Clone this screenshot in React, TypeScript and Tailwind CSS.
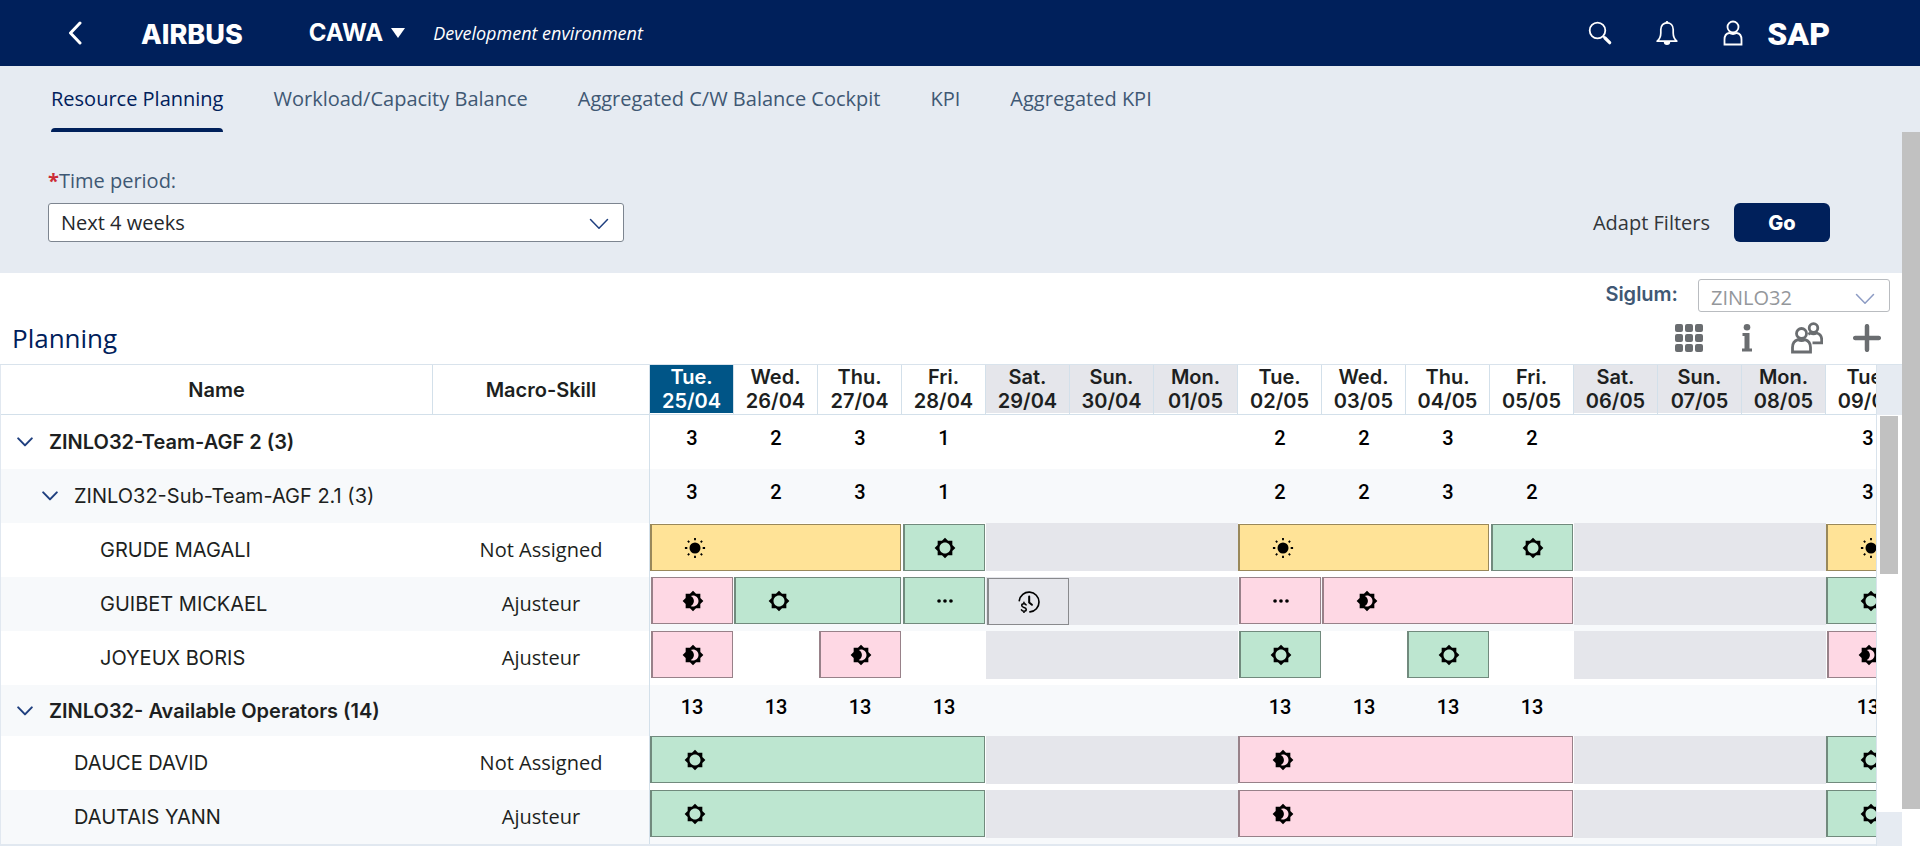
import { useState } from "react";
import type { ReactNode } from "react";

type Kind = "sun" | "ring" | "half" | "dots" | "clock";
type Tone = "yellow" | "green" | "pink" | "grey";
type Cell = { span: number; off?: boolean; wide?: boolean; count?: number; tone?: Tone; kind?: Kind };
type Row = {
  name: string;
  skill?: string;
  level: number;
  group?: boolean;
  short?: boolean;
  cells: Cell[];
};

const days = [
  ["Tue.", "25/04"],
  ["Wed.", "26/04"],
  ["Thu.", "27/04"],
  ["Fri.", "28/04"],
  ["Sat.", "29/04"],
  ["Sun.", "30/04"],
  ["Mon.", "01/05"],
  ["Tue.", "02/05"],
  ["Wed.", "03/05"],
  ["Thu.", "04/05"],
  ["Fri.", "05/05"],
  ["Sat.", "06/05"],
  ["Sun.", "07/05"],
  ["Mon.", "08/05"],
  ["Tue.", "09/05"],
];
const offDays = [4, 5, 6, 11, 12, 13];

const bar = (span: number, tone: Tone, kind: Kind): Cell => ({ span, tone, kind, wide: span > 1 });
// a shift that goes on past the last visible day
const open = (tone: Tone, kind: Kind): Cell => ({ span: 1, tone, kind, wide: true });
const off = (span = 3): Cell => ({ span, off: true });
const empty = (span = 1): Cell => ({ span });
const counts = (a: number[], b: number[], last: number): Cell[] => [
  ...a.map((count) => ({ span: 1, count })),
  empty(3),
  ...b.map((count) => ({ span: 1, count })),
  empty(3),
  { span: 1, count: last },
];

const rows: Row[] = [
  { name: "ZINLO32-Team-AGF 2 (3)", level: 0, group: true, cells: counts([3, 2, 3, 1], [2, 2, 3, 2], 3) },
  { name: "ZINLO32-Sub-Team-AGF 2.1 (3)", level: 1, group: true, cells: counts([3, 2, 3, 1], [2, 2, 3, 2], 3) },
  {
    name: "GRUDE MAGALI",
    skill: "Not Assigned",
    level: 2,
    cells: [
      bar(3, "yellow", "sun"),
      bar(1, "green", "ring"),
      off(),
      bar(3, "yellow", "sun"),
      bar(1, "green", "ring"),
      off(),
      open("yellow", "sun"),
    ],
  },
  {
    name: "GUIBET MICKAEL",
    skill: "Ajusteur",
    level: 2,
    cells: [
      bar(1, "pink", "half"),
      bar(2, "green", "ring"),
      bar(1, "green", "dots"),
      { span: 1, off: true, tone: "grey", kind: "clock" },
      off(2),
      bar(1, "pink", "dots"),
      bar(3, "pink", "half"),
      off(),
      open("green", "ring"),
    ],
  },
  {
    name: "JOYEUX BORIS",
    skill: "Ajusteur",
    level: 2,
    cells: [
      bar(1, "pink", "half"),
      empty(),
      bar(1, "pink", "half"),
      empty(),
      off(),
      bar(1, "green", "ring"),
      empty(),
      bar(1, "green", "ring"),
      empty(),
      off(),
      bar(1, "pink", "half"),
    ],
  },
  {
    name: "ZINLO32- Available Operators (14)",
    level: 0,
    group: true,
    short: true,
    cells: counts([13, 13, 13, 13], [13, 13, 13, 13], 13),
  },
  {
    name: "DAUCE DAVID",
    skill: "Not Assigned",
    level: 1,
    cells: [bar(4, "green", "ring"), off(), bar(4, "pink", "half"), off(), open("green", "ring")],
  },
  {
    name: "DAUTAIS YANN",
    skill: "Ajusteur",
    level: 1,
    cells: [bar(4, "green", "ring"), off(), bar(4, "pink", "half"), off(), open("green", "ring")],
  },
];

const tones: Record<Tone, string> = {
  yellow: "bg-[#ffe397]",
  green: "bg-[#bde6d0]",
  pink: "bg-[#fed8e4]",
  grey: "bg-[#e5e6eb]",
};

const gear =
  "M20 15.31L23.31 12 20 8.69V4h-4.69L12 .69 8.69 4H4v4.69L.69 12 4 15.31V20h4.69L12 23.31 15.31 20H20v-4.69z";

const ShiftIcon = ({ kind }: { kind: Kind }) => (
  <svg viewBox="0 0 24 24" className="size-[22px]" fill="currentColor" aria-hidden="true">
    {kind === "ring" && (
      <path d={gear + "M12 18c-3.31 0-6-2.69-6-6s2.69-6 6-6 6 2.69 6 6-2.69 6-6 6z"} fillRule="evenodd" />
    )}
    {kind === "half" && (
      <path
        fillRule="evenodd"
        d={
          gear +
          "M12 18c-.89 0-1.74-.2-2.5-.55C11.56 16.5 13 14.42 13 12s-1.44-4.5-3.5-5.45C10.26 6.2 11.11 6 12 6c3.31 0 6 2.69 6 6s-2.69 6-6 6z"
        }
      />
    )}
    {kind === "sun" && (
      <>
        <circle cx="12" cy="12" r="6" />
        <g stroke="currentColor" strokeWidth="2">
          <path d="M12 1v2.6M12 20.4V23M1 12h2.6M20.4 12H23" />
          <path d="M4.2 4.2l1.6 1.6M18.2 18.2l1.6 1.6M4.2 19.8l1.6-1.6M18.2 5.8l1.6-1.6" />
        </g>
      </>
    )}
    {kind === "dots" && (
      <>
        <circle cx="5.5" cy="12" r="2" />
        <circle cx="12" cy="12" r="2" />
        <circle cx="18.5" cy="12" r="2" />
      </>
    )}
    {kind === "clock" && (
      <g fill="none" stroke="currentColor" strokeLinecap="round">
        <path strokeWidth="1.8" d="M1.4 10.6A10.8 10.8 0 1 1 13 22.8" />
        <path strokeWidth="2.2" d="M12.2 6v6.6l3 2.4" />
        <path
          strokeWidth="1.7"
          d="M8.8 15.2c-.5-.8-1.4-1.2-2.4-1.2-1.3 0-2.3.7-2.3 1.8 0 2.8 4.9 1.4 4.9 4.3 0 1.2-1.1 1.9-2.5 1.9-1.2 0-2.2-.5-2.7-1.4M6.5 12.4V14M6.5 22v1.5"
        />
      </g>
    )}
  </svg>
);

const Chevron = ({ className }: { className: string }) => (
  <svg viewBox="0 0 20 12" className={className} fill="none" stroke="currentColor" aria-hidden="true">
    <path d="M1.5 1.5 10 10.2 18.5 1.5" strokeLinecap="round" strokeLinejoin="round" />
  </svg>
);

const IconButton = ({ label, children }: { label: string; children: ReactNode }) => (
  <button type="button" aria-label={label} className="flex h-8 min-w-7 items-center justify-center">
    {children}
  </button>
);

const ShellBar = () => (
  <header className="flex h-[66px] items-center bg-[#00205b] pr-[90px] pl-[66px] text-white">
    <button type="button" aria-label="Back">
      <svg viewBox="0 0 18 24" className="h-6 w-[18px]" fill="none" stroke="currentColor" strokeWidth="3">
        <path d="M14 2 4.5 12 14 22" strokeLinecap="round" strokeLinejoin="round" />
      </svg>
    </button>
    <a href="#home" className="ml-[57px] pt-1 font-[Inter] text-[27px] leading-8 font-extrabold">
      AIRBUS
    </a>
    <button type="button" className="ml-[66px] flex items-center gap-2 font-[Inter] text-2xl font-bold">
      CAWA
      <svg viewBox="0 0 14 10" className="h-[10px] w-[14px]" fill="currentColor" aria-hidden="true">
        <path d="M0 0h14L7 10z" />
      </svg>
    </button>
    <span className="ml-7 text-lg font-medium italic">Development environment</span>
    <div className="ml-auto flex items-center">
      <button type="button" aria-label="Search" className="mr-[43px]">
        <svg viewBox="0 0 24 26" className="h-[26px] w-6" fill="none" stroke="currentColor">
          <circle cx="9.5" cy="10.5" r="7.8" strokeWidth="1.8" />
          <path d="M15 16l1.5 1.5" strokeWidth="2" />
          <path d="M17 18l4.7 4.7" strokeWidth="3.2" strokeLinecap="round" />
        </svg>
      </button>
      <button type="button" aria-label="Notifications" className="mr-[42px]">
        <svg viewBox="0 0 24 26" className="h-[26px] w-6" fill="none" stroke="currentColor" strokeWidth="1.7">
          <path
            d="M2.2 21.2c2.8-2.6 3.6-5 3.6-8.2V9.5C5.8 5.5 8.5 2.8 12 2.8s6.2 2.7 6.2 6.7V13c0 3.2.8 5.6 3.6 8.2z"
            strokeLinejoin="round"
          />
          <circle cx="12" cy="2.2" r="1.3" fill="currentColor" stroke="none" />
          <path d="M8.8 22h6.4a3.2 3 0 0 1-6.4 0z" fill="currentColor" stroke="none" />
        </svg>
      </button>
      <button type="button" aria-label="Profile" className="mr-[22px]">
        <svg viewBox="0 0 24 26" className="h-[26px] w-6" fill="none" stroke="currentColor" strokeWidth="1.8">
          <circle cx="12" cy="7" r="5.5" />
          <path d="M3.5 24.5v-5c0-3.5 2-6 4.8-6.5 2.2 1.2 5.2 1.2 7.4 0 2.8.5 4.8 3 4.8 6.5v5z" />
        </svg>
      </button>
      <span className="pt-px font-[Roboto] text-[32px] leading-8 font-black">SAP</span>
    </div>
  </header>
);

const tabs = [
  "Resource Planning",
  "Workload/Capacity Balance",
  "Aggregated C/W Balance Cockpit",
  "KPI",
  "Aggregated KPI",
];

const TabBar = () => {
  const [active, setActive] = useState<string>(tabs[0]);

  return (
    <nav className="flex h-[66px] gap-[50px] bg-[#e6ebf2] pl-[51px]">
      {tabs.map((tab) => (
        <button
          type="button"
          key={tab}
          onClick={() => setActive(tab)}
          className={
            tab === active
              ? "flex flex-col justify-between pt-[19px] text-[#00205b]"
              : "flex flex-col justify-between pt-[19px] text-[#3f5874]"
          }
        >
          {tab}
          {tab === active && <span className="h-1 w-full rounded-t bg-[#00205b]"></span>}
        </button>
      ))}
    </nav>
  );
};

const FilterBar = () => (
  <section className="flex h-[141px] items-end justify-between bg-[#e6ebf2] pr-[72px] pb-[31px] pl-12">
    <div className="w-1/3 max-w-xl">
      <label htmlFor="period" className="block pb-2 text-[#3f5874]">
        <span className="font-bold text-[#cc2b36]">*</span>Time period:
      </label>
      <div className="relative">
        <select
          id="period"
          className="block h-[39px] w-full appearance-none rounded-[3px] border border-[#7d8590] bg-white px-3 text-[#24272b]"
        >
          <option>Next 4 weeks</option>
        </select>
        <Chevron className="pointer-events-none absolute top-[15px] right-[15px] h-3 w-5 stroke-[1.5] text-[#1f3f7f]" />
      </div>
    </div>
    <div className="flex items-center gap-6">
      <button type="button" className="text-[#32363a]">
        Adapt Filters
      </button>
      <button type="button" className="h-[39px] w-24 rounded-md bg-[#00205b] font-[Inter] font-extrabold text-white">
        Go
      </button>
    </div>
  </section>
);

const Toolbar = () => (
  <section className="flex h-[91px] flex-col bg-white">
    <div className="flex items-start justify-end gap-5 pt-[6px] pr-3">
      <label htmlFor="siglum" className="pt-px font-[Inter] font-semibold text-[#3f5874]">
        Siglum:
      </label>
      <div className="relative">
        <select
          id="siglum"
          disabled
          className="block h-[33px] w-48 appearance-none rounded-[3px] border border-[#b9bcc0] bg-white px-3 pt-1 text-[#94979b]"
        >
          <option>ZINLO32</option>
        </select>
        <Chevron className="pointer-events-none absolute top-[14px] right-[15px] h-3 w-5 stroke-[1.5] text-[#8c9bc4]" />
      </div>
    </div>
    <div className="flex flex-1 items-center justify-between pr-[21px] pl-3">
      <h2 className="text-[26px] leading-8 text-[#00205b]">Planning</h2>
      <div className="flex items-center gap-[30px] text-[#6a6d70]">
        <IconButton label="Grid view">
          <svg viewBox="0 0 28 28" className="size-7" fill="currentColor">
            {[0, 10, 20].map((y) =>
              [0, 10, 20].map((x) => <rect key={x + "-" + y} x={x} y={y} width="8" height="8" rx="2" />)
            )}
          </svg>
        </IconButton>
        <IconButton label="Legend">
          <svg viewBox="0 0 10 28" className="h-7 w-[10px]" fill="currentColor">
            <circle cx="5" cy="3.3" r="3.3" />
            <path d="M.5 9h7v15.5H10v3H0v-3h2.500V12H.5z" />
          </svg>
        </IconButton>
        <IconButton label="Teams">
          <svg viewBox="0 0 32 32" className="size-8" fill="none" stroke="currentColor" strokeWidth="2.8">
            <circle cx="10.5" cy="11.5" r="5" />
            <path d="M1.5 30v-4.5c0-4 2.200-6.800 5.500-7.800 2.200 1.200 4.800 1.200 7 0 3.300 1 5.500 3.800 5.500 7.800V30z" />
            <circle cx="22.5" cy="6" r="4.3" />
            <path d="M21.5 20.8h9.200v-3c0-3.600-2-6-5-6.800-2 1-4.400 1-6.200 0l-2.200 1.200" />
          </svg>
        </IconButton>
        <IconButton label="Add">
          <svg viewBox="0 0 28 28" className="size-7" fill="none" stroke="currentColor" strokeWidth="4.5">
            <path d="M14 2.2v23.6M2.2 14h23.6" strokeLinecap="round" />
          </svg>
        </IconButton>
      </div>
    </div>
  </section>
);

const DayCell = ({ cell, lower }: { cell: Cell; lower: boolean }) => {
  if (cell.count !== undefined) {
    return <td className="pb-2 text-center align-middle font-[Roboto] font-medium text-black">{cell.count}</td>;
  }
  return (
    <td colSpan={cell.span} className="p-0 align-top">
      <div className={cell.off ? "h-12 bg-[#e5e6eb]" : "h-12"}>
        {cell.kind && cell.tone && (
          <div className={lower || cell.kind === "clock" ? "h-full pt-px" : "h-full pb-px"}>
            <div
              className={`${tones[cell.tone]} ${
                cell.wide ? "mr-px pl-8" : "mr-px ml-px justify-center"
              } flex h-full items-center border border-l-2 border-black/40 text-black`}
            >
              <ShiftIcon kind={cell.kind} />
            </div>
          </div>
        )}
      </div>
    </td>
  );
};

const indent = ["pl-4", "pl-[41px]", "pl-[99px]"];
const indentLeaf = ["pl-12", "pl-[73px]", "pl-[99px]"];

const PlanningTable = () => (
  <div className="flex border-t border-[#d9e3ec] bg-white">
    <div className="min-w-0 flex-1 overflow-hidden border-b-2 border-l border-[#e1e8f0]">
      <table className="w-[1909px] table-fixed border-separate border-spacing-0 font-[Inter] text-[#1d1f21]">
        <colgroup>
          <col className="w-[432px]" />
          <col className="w-[217px]" />
          {days.map(([, date]) => (
            <col key={date} className="w-[84px]" />
          ))}
        </colgroup>
        <thead>
          <tr className="h-[50px]">
            <th className="border-r border-b border-[#d3e0ea] p-0 font-semibold">Name</th>
            <th className="border-r border-b border-[#d3e0ea] p-0 font-semibold">Macro-Skill</th>
            {days.map(([day, date], i) => (
              <th key={date} className="border-r border-b border-[#d3e0ea] p-0 align-top leading-6 font-semibold">
                <div
                  className={
                    i === 0
                      ? "h-12 bg-[#005587] text-white"
                      : offDays.includes(i)
                        ? "h-12 bg-[#e5e6eb]"
                        : "h-12"
                  }
                >
                  {day}
                  <br />
                  {date}
                </div>
              </th>
            ))}
          </tr>
        </thead>
        <tbody>
          {rows.map((row, i) => (
            <tr
              key={row.name}
              className={`${row.short ? "h-[51px]" : "h-[54px]"} ${i % 2 ? "bg-[#f7f9fb]" : "bg-white"}`}
            >
              <td
                className={`py-0 pr-0 ${row.group ? indent[row.level] : indentLeaf[row.level]} ${
                  row.group && row.level === 0 ? "font-semibold" : ""
                }`}
              >
                {row.group ? (
                  <button type="button" aria-expanded="true" className="flex items-center gap-4">
                    <Chevron className="h-[10px] w-4 stroke-[2.5] text-[#1f3f7f]" />
                    {row.name}
                  </button>
                ) : (
                  row.name
                )}
              </td>
              <td className="border-r border-[#d3e0ea] p-0 text-center font-['Open_Sans']">{row.skill}</td>
              {row.cells.map((cell, j) => (
                <DayCell key={j} cell={cell} lower={i === 2} />
              ))}
            </tr>
          ))}
        </tbody>
      </table>
    </div>
    <div className="flex w-[26px] flex-col border-l border-[#d9e3ec]">
      <div className="h-[50px] bg-[#e6ebf2]"></div>
      <div className="mt-px ml-[3px] h-[158px] w-[18px] bg-[#c1c1c1]"></div>
      <div className="mt-auto h-[34px] bg-[#e6ebf2]"></div>
    </div>
  </div>
);

export default function App() {
  return (
    <div className="min-h-screen overflow-hidden bg-white font-['Open_Sans','Noto_Sans',sans-serif] text-xl leading-7">
      <ShellBar />
      <TabBar />
      <div className="flex">
        <main className="min-w-0 flex-1">
          <FilterBar />
          <Toolbar />
          <PlanningTable />
        </main>
        <div className="w-[18px] pb-[37px]">
          <div className="h-full bg-[#c1c1c1]"></div>
        </div>
      </div>
    </div>
  );
}
